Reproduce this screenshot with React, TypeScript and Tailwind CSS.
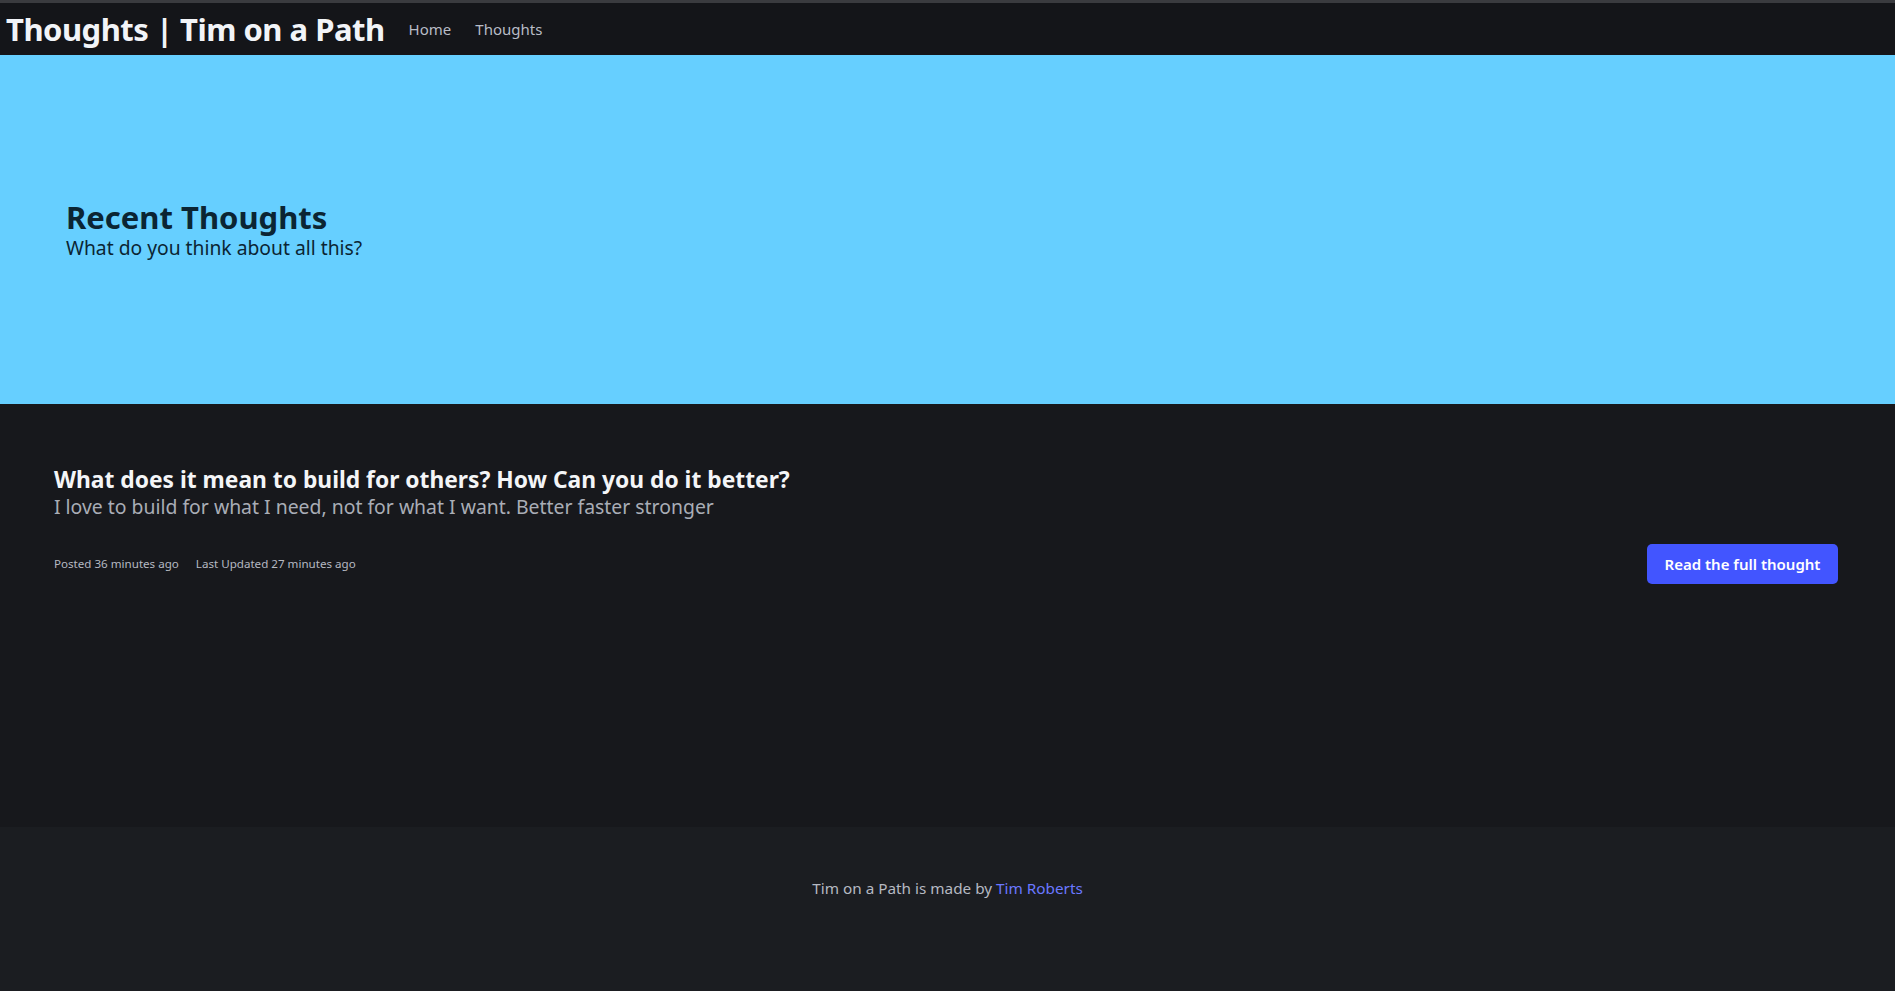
const App = () => {
  return (
    <div className="min-h-screen flex flex-col bg-[#17181c] font-['Noto_Sans',sans-serif]">
      <div className="h-[3px] bg-[#3a3b3f]" />
      <nav className="h-[52px] bg-[#141519] flex items-center px-[6px]">
        <span className="text-[31px] font-bold text-[#f2f4f8] tracking-[-0.5px] leading-none">
          Thoughts | Tim on a Path
        </span>
        <a className="ml-[24px] text-[15px] text-[#b8bcc6]">Home</a>
        <a className="ml-[24px] text-[15px] text-[#b8bcc6]">Thoughts</a>
      </nav>

      <section className="h-[349px] bg-[#66cfff] flex flex-col justify-center px-[66px]">
        <h1 className="text-[31px] font-bold text-[#0b2533] leading-[36px]">Recent Thoughts</h1>
        <p className="text-[19.3px] text-[#0b2533] leading-[25px]">What do you think about all this?</p>
      </section>

      <main className="h-[423px] pl-[54px] pr-[57px] pt-[62px]">
        <h2 className="text-[22.8px] font-bold text-[#f4f5f7] leading-[28px]">
          What does it mean to build for others? How Can you do it better?
        </h2>
        <p className="text-[19.4px] text-[#a9adb6] leading-[26px]">
          I love to build for what I need, not for what I want. Better faster stronger
        </p>
        <div className="flex items-center justify-between mt-[24px]">
          <div className="flex gap-[17px] text-[11.6px] text-[#b5b9c2]">
            <span>Posted 36 minutes ago</span>
            <span>Last Updated 27 minutes ago</span>
          </div>
          <button className="h-[40px] w-[191px] rounded-[5px] bg-[#4255ff] text-white text-[15px] font-semibold">
            Read the full thought
          </button>
        </div>
      </main>

      <footer className="flex-1 bg-[#1b1d21] flex justify-center pt-[50px]">
        <p className="text-[15.3px] text-[#b5b9c2]">
          Tim on a Path is made by <a className="text-[#6a78ff]">Tim Roberts</a>
        </p>
      </footer>
    </div>
  );
};

export default App;
